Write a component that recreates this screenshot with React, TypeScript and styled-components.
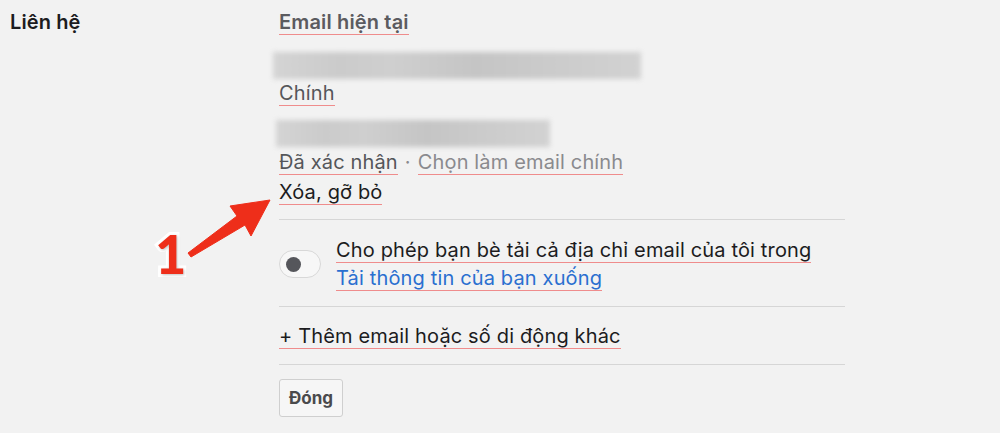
import React from "react";
import styled, { createGlobalStyle } from "styled-components";

const Global = createGlobalStyle`
  html, body { margin: 0; padding: 0; background: #f2f2f2; }
  body { font-family: Inter, "Liberation Sans", Arial, sans-serif; -webkit-font-smoothing: antialiased; }
`;

const Page = styled.div`
  position: relative;
  width: 1000px;
  height: 433px;
  display: flex;
  background: #f2f2f2;
  overflow: hidden;
`;

const Label = styled.div`
  width: 269px;
  padding: 10px 0 0 10px;
  font-size: 20px;
  line-height: 24px;
  font-weight: 600;
  letter-spacing: 0.1px;
  color: #1c1c1e;
`;

const Content = styled.div`
  width: 566px;
  padding-top: 10px;
  display: flex;
  flex-direction: column;
  align-items: flex-start;
`;

const Line = styled.div<{ $mt?: number }>`
  font-size: 20px;
  letter-spacing: 0.15px;
  line-height: 24px;
  height: 24px;
  margin-top: ${(p) => p.$mt ?? 0}px;
  color: #1c1c1e;
  white-space: nowrap;
  display: flex;
  align-items: flex-start;
`;

const U = styled.span<{ $color?: string; $bold?: boolean }>`
  display: inline-block;
  height: 25px;
  box-sizing: border-box;
  line-height: 24px;
  color: ${(p) => p.$color ?? "#1c1c1e"};
  font-weight: ${(p) => (p.$bold ? 600 : 400)};
  border-bottom: 1px solid #ef8c8c;
`;

const Dot = styled.span`
  color: #8a8a8e;
  margin: 0 7px;
  line-height: 24px;
`;

const Blur = styled.div<{ $w: number; $mt: number; $ml: number }>`
  width: ${(p) => p.$w}px;
  height: 27px;
  margin-top: ${(p) => p.$mt}px;
  margin-left: ${(p) => p.$ml}px;
  background: linear-gradient(
    90deg,
    #d4d4d4 0%,
    #cbcbcb 18%,
    #cfcfcf 32%,
    #c5c5c5 55%,
    #cbcbcb 75%,
    #d2d2d2 100%
  );
  filter: blur(2.5px);
`;

const Divider = styled.div<{ $mt: number }>`
  align-self: stretch;
  height: 1px;
  background: #d6d6d6;
  margin-top: ${(p) => p.$mt}px;
`;

const ToggleRow = styled.div`
  display: flex;
  align-items: center;
  gap: 15px;
  margin-top: 18px;
`;

const Toggle = styled.div`
  width: 42px;
  height: 28px;
  box-sizing: border-box;
  border: 1px solid #d8d8d8;
  border-radius: 14px;
  background: #f7f7f7;
  display: flex;
  align-items: center;
  padding-left: 6px;
`;

const Knob = styled.div`
  width: 15px;
  height: 15px;
  border-radius: 50%;
  background: #55565b;
`;

const ToggleText = styled.div`
  display: flex;
  flex-direction: column;
  gap: 4px;
`;

const Button = styled.button`
  margin-top: 14px;
  width: 64px;
  height: 38px;
  padding: 0;
  font-family: Inter, "Liberation Sans", Arial, sans-serif;
  font-size: 17px;
  font-weight: 700;
  color: #4a4a4c;
  background: #f6f6f6;
  border: 1px solid #cfcfcf;
  border-radius: 3px;
`;

const Annotation = styled.div`
  position: absolute;
  left: 150px;
  top: 190px;
  width: 130px;
  height: 95px;
`;

const Num = styled.div`
  position: absolute;
  left: 5px;
  top: 37px;
  font-family: Lato, "Liberation Sans", Arial, sans-serif;
  font-weight: 900;
  font-size: 54px;
  line-height: 1;
  color: #ee2e1a;
  -webkit-text-stroke: 6px #fff;
  paint-order: stroke fill;
  text-shadow: 1px 1px 3px rgba(0, 0, 0, 0.25);
`;

const Arrow = styled.svg`
  position: absolute;
  left: 0;
  top: 0;
`;

export default function App() {
  return (
    <>
      <Global />
      <Page>
        <Label>Liên hệ</Label>
        <Content>
          <Line>
            <U $color="#5b5b5f" $bold>Email hiện tại</U>
          </Line>
          <Blur $w={368} $mt={18} $ml={-6} />
          <Line $mt={2}>
            <U $color="#55565a">Chính</U>
          </Line>
          <Blur $w={274} $mt={15} $ml={-3} />
          <Line $mt={3}>
            <U $color="#55565a">Đã xác nhận</U>
            <Dot>·</Dot>
            <U $color="#8a8a8e">Chọn làm email chính</U>
          </Line>
          <Line $mt={6}>
            <U>Xóa, gỡ bỏ</U>
          </Line>
          <Divider $mt={15} />
          <ToggleRow>
            <Toggle>
              <Knob />
            </Toggle>
            <ToggleText>
              <Line>
                <U>Cho phép bạn bè tải cả địa chỉ email của tôi trong</U>
              </Line>
              <Line>
                <U $color="#2a6fd0">Tải thông tin của bạn xuống</U>
              </Line>
            </ToggleText>
          </ToggleRow>
          <Divider $mt={16} />
          <Line $mt={17}>
            <U>+ Thêm email hoặc số di động khác</U>
          </Line>
          <Divider $mt={16} />
          <Button>Đóng</Button>
        </Content>
        <Annotation>
          <Arrow width="130" height="95" viewBox="0 0 130 95">
            <path
              d="M38 63 L87 26 L80 16 L120 10 L101 46 L95 35 L41 67 Z"
              fill="#ee2e1a"
              stroke="#ee2e1a"
              strokeWidth="1"
              strokeLinejoin="round"
            />
          </Arrow>
          <Num>1</Num>
        </Annotation>
      </Page>
    </>
  );
}
